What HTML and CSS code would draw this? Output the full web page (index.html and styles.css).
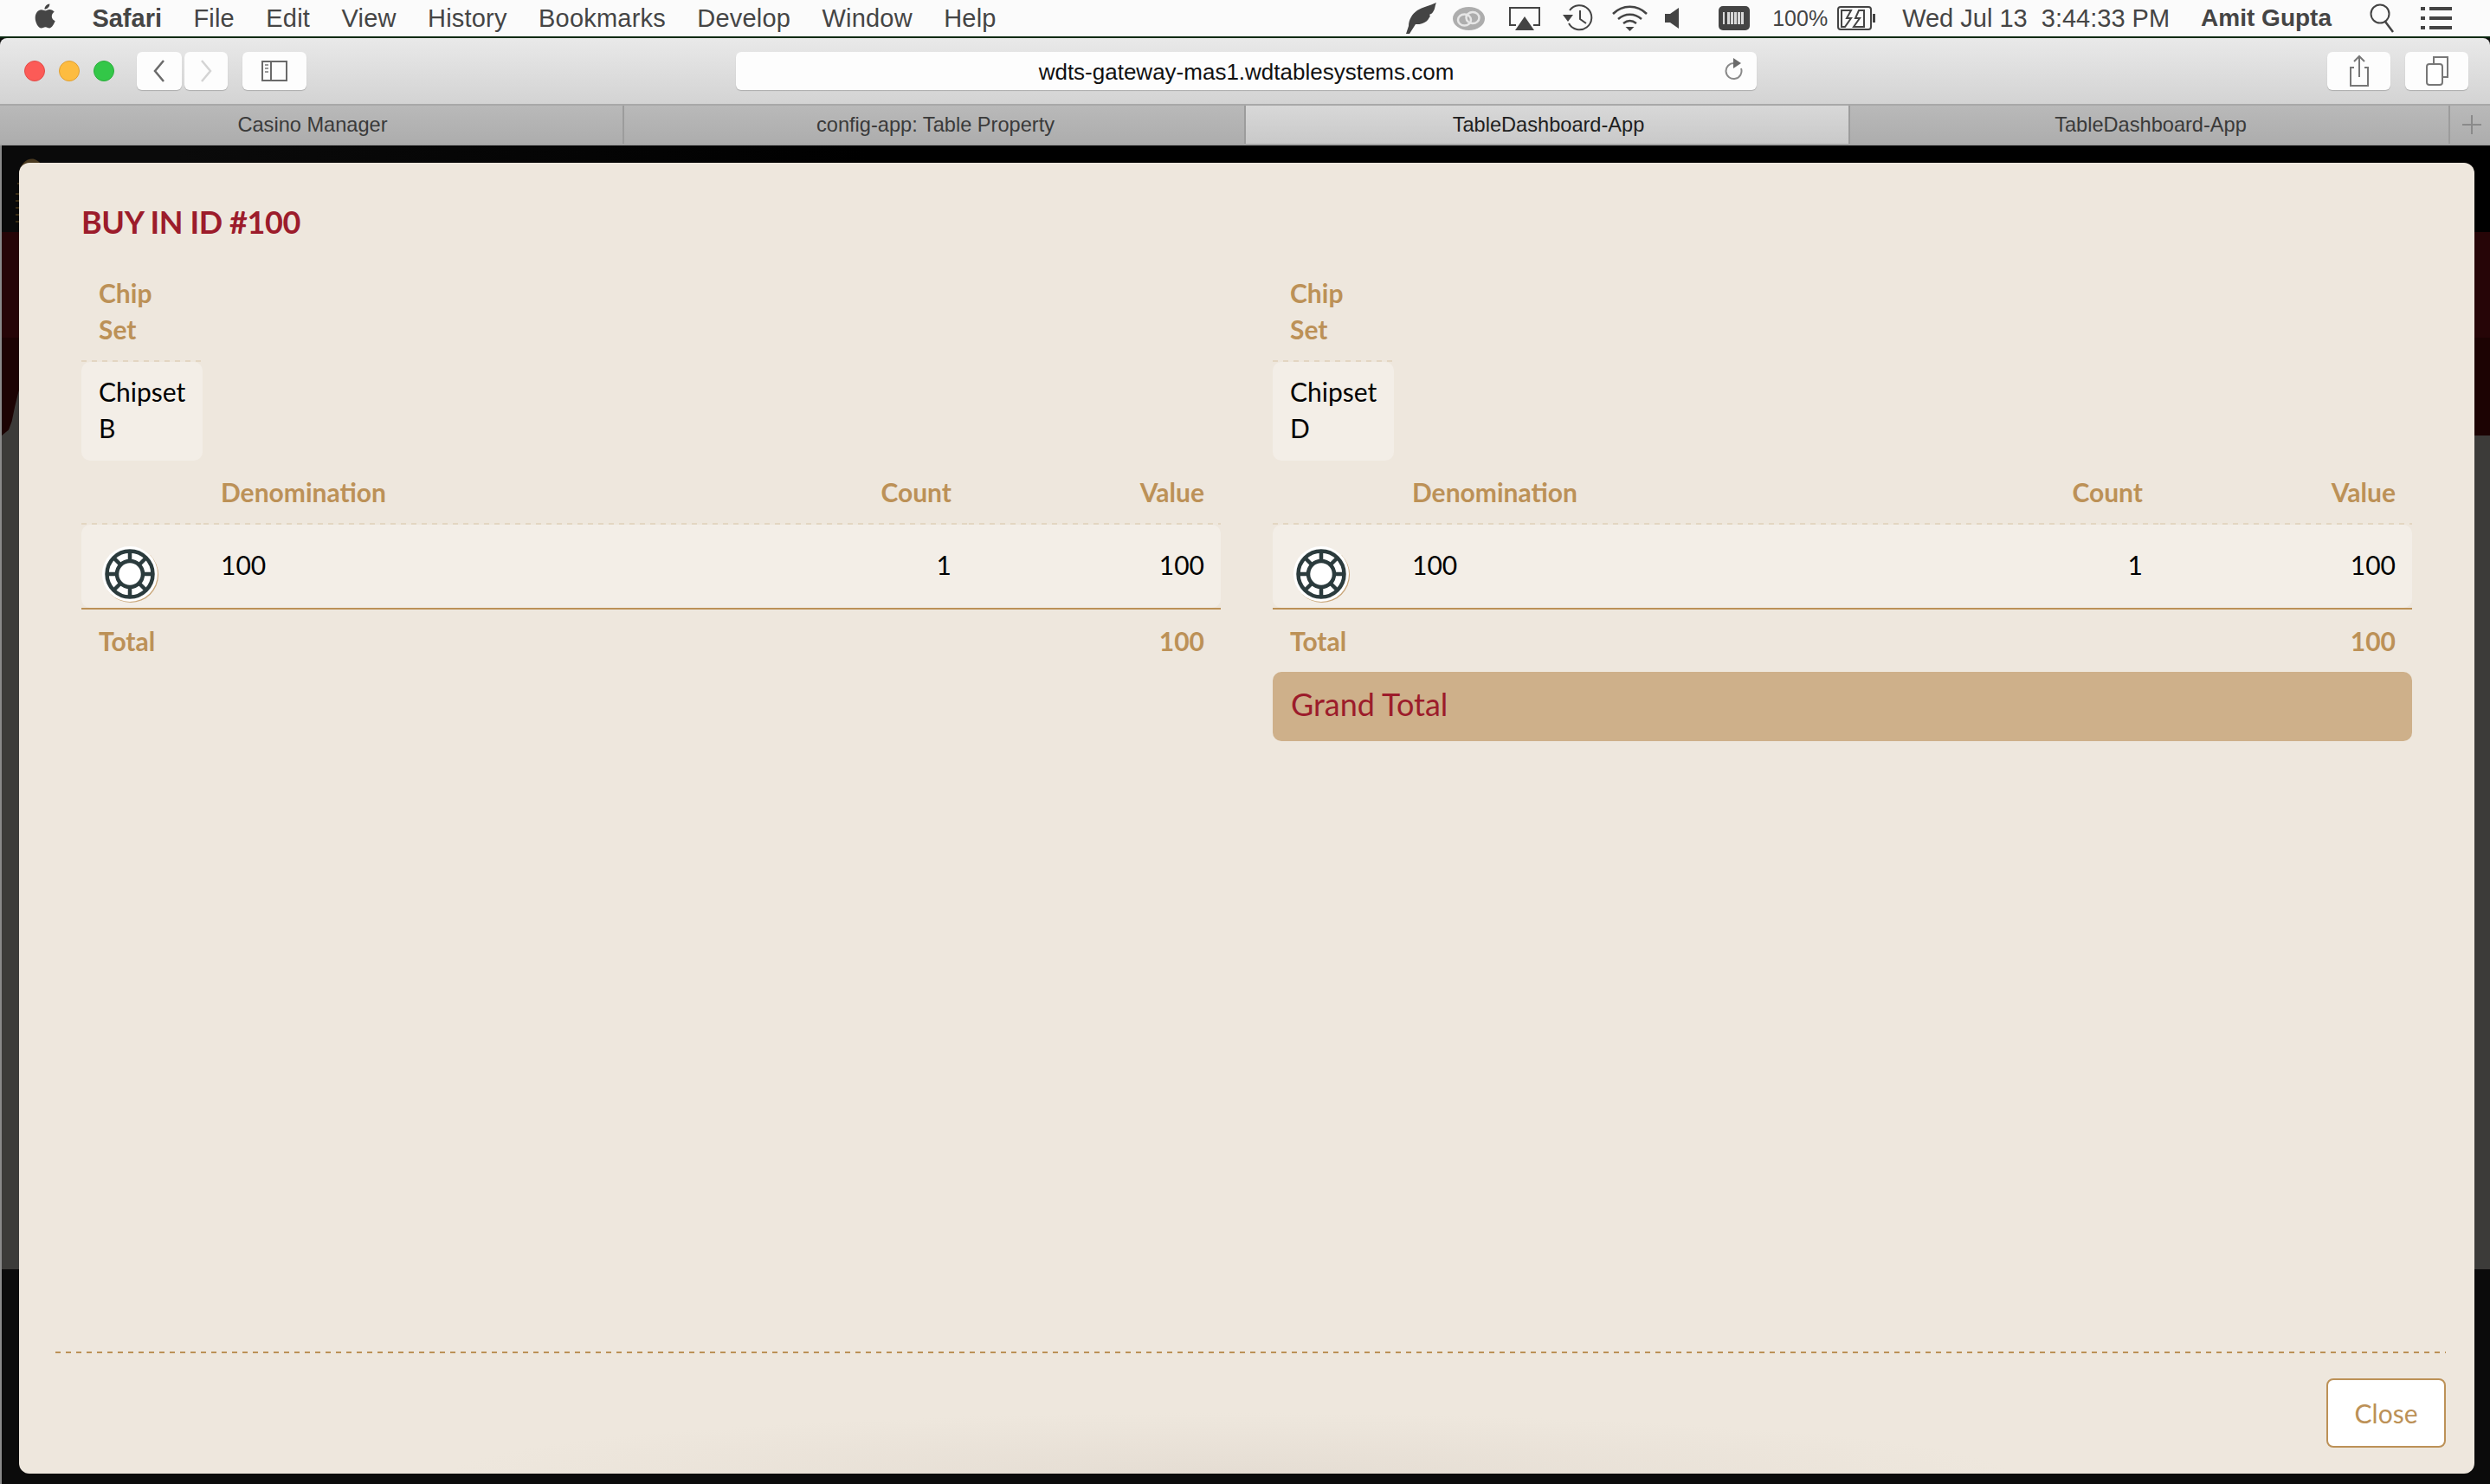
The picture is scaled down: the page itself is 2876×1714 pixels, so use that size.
FILE: index.html
```html
<!DOCTYPE html>
<html lang="en">
<head>
  <meta charset="UTF-8" />
  <title>TableDashboard-App</title>
  <link rel="stylesheet" href="styles.css">
</head>
<body>
  <header class="menubar">
    <nav class="menu-left">
      <svg class="apple" viewBox="0 0 26 32"><path d="M18 1c.3 3-2.600 6.500-6 6.300C11.700 4.300 14.800 1.200 18 1zM12.500 9c1.400 0 3-1.400 5.500-1.400 2.300 0 4.400 1.100 5.700 3-4.600 2.700-3.900 9 .9 10.900-1.100 3.200-4 8.500-6.800 8.500-1.900 0-2.600-1.300-4.800-1.300-2.300 0-3.100 1.300-4.900 1.300C4.500 30 .7 23.300.7 17.700.7 11.800 4.300 8 8 8c1.900 0 3.300 1 4.500 1z"/></svg>
      <span class="menu-app">Safari</span>
      <span>File</span>
      <span>Edit</span>
      <span>View</span>
      <span>History</span>
      <span>Bookmarks</span>
      <span>Develop</span>
      <span>Window</span>
      <span>Help</span>
    </nav>
    <div class="menu-right">
      <svg class="mi mi-feather" viewBox="0 0 36 36"><path d="M36 0C34 4 35 7 32 11c-1 2-3 2-4 3 1 1 1 2 0 3-2 4-5 6-8 7-2 1-5 1-8 1l-7 11H1l3-9C4 20 8 13 14 9c6-4 14-5 22-9z"/></svg>
      <svg class="mi mi-cc" viewBox="0 0 37 27"><ellipse cx="18.500" cy="13.500" rx="18.500" ry="13.500" fill="#adadad"/><ellipse cx="13.500" cy="15" rx="7.500" ry="6.500" fill="none" stroke="#e6e6e6" stroke-width="2.500"/><ellipse cx="23" cy="12.500" rx="7.500" ry="6.500" fill="none" stroke="#e6e6e6" stroke-width="2.500"/></svg>
      <svg class="mi mi-airplay" viewBox="0 0 36 27"><path d="M8 21H1V1h34v20h-7" fill="none" stroke="#444" stroke-width="2"/><path d="M18 11l11 16H7z"/></svg>
      <svg class="mi mi-history" viewBox="0 0 36 32"><path d="M9 7a14 14 0 1 1-1 15" fill="none" stroke="#444" stroke-width="2"/><path d="M1 12h12l-6 8z"/><path d="M21 7v10l7 5" fill="none" stroke="#444" stroke-width="2"/></svg>
      <svg class="mi mi-wifi" viewBox="0 0 41 30"><path d="M1 10c11-11 28-11 39 0M7 16c8-7 19-7 27 0M13 21c5-4 10-4 15 0" fill="none" stroke="#444" stroke-width="2.500"/><path d="M20.500 30l-5-5h10z"/></svg>
      <svg class="mi mi-speaker" viewBox="0 0 16 24"><path d="M0 7h6l10-7v24L6 17H0z"/></svg>
      <svg class="mi mi-bars" viewBox="0 0 36 28"><rect width="36" height="28" rx="5"/><path d="M5 7h2v14H5zM10 7h3v14h-3zM14 7h3v14h-3zM18 7h3v14h-3zM22 7h3v14h-3zM26 7h3v14h-3z" fill="#d8d8d8"/></svg>
      <span class="menu-pct">100%</span>
      <svg class="mi mi-battery" viewBox="0 0 44 28"><rect x="1" y="1" width="38" height="26" rx="3" fill="none" stroke="#444" stroke-width="2"/><path d="M41 9h3v10h-3z"/><path d="M5 5h11l-5 9h5L9 24H5zM31 5v19H19l7-10h-5l4-9z" fill="none" stroke="#444" stroke-width="2"/></svg>
      <span class="menu-clock">Wed Jul 13&nbsp; 3:44:33 PM</span>
      <span class="menu-user">Amit Gupta</span>
      <svg class="mi mi-search" viewBox="0 0 28 34"><circle cx="12" cy="12" r="10.500" fill="none" stroke="#444" stroke-width="2"/><path d="M18 21l9 12" stroke="#444" stroke-width="2.500"/></svg>
      <svg class="mi mi-list" viewBox="0 0 36 26"><path d="M0 0h5v4H0zM10 0h26v4H10zM0 11h5v4H0zM10 11h26v4H10zM0 22h5v4H0zM10 22h26v4H10z"/></svg>
    </div>
  </header>

  <div class="toolbar">
    <div class="lights">
      <i class="light light-red"></i>
      <i class="light light-yellow"></i>
      <i class="light light-green"></i>
    </div>
    <div class="tool-btn btn-back"><svg viewBox="0 0 14 26"><path d="M12 1L2 13l10 12" fill="none" stroke="#6a6a6a" stroke-width="2.500"/></svg></div>
    <div class="tool-btn btn-forward"><svg viewBox="0 0 14 26"><path d="M2 1l10 12L2 25" fill="none" stroke="#d4d4d4" stroke-width="2.500"/></svg></div>
    <div class="tool-btn btn-sidebar"><svg viewBox="0 0 30 24"><rect x="1" y="1" width="28" height="22" fill="none" stroke="#6a6a6a" stroke-width="2"/><path d="M11 1v22" stroke="#6a6a6a" stroke-width="2"/><path d="M4 5h4M4 9h4M4 13h4" stroke="#9a9a9a" stroke-width="2"/></svg></div>
    <div class="url-field">
      <span class="url-text">wdts-gateway-mas1.wdtablesystems.com</span>
      <svg class="url-reload" viewBox="0 0 22 28"><path d="M12 6a9 9 0 1 0 8 6" fill="none" stroke="#8a8a8a" stroke-width="2"/><path d="M11 0l9 6-9 6z" fill="#6a6a6a"/></svg>
    </div>
    <div class="tool-btn btn-share"><svg viewBox="0 0 24 38"><path d="M6 15H2v21h20V15h-4" fill="none" stroke="#777" stroke-width="2"/><path d="M12 26V2M6 8l6-6 6 6" fill="none" stroke="#777" stroke-width="2"/></svg></div>
    <div class="tool-btn btn-tabs"><svg viewBox="0 0 26 34"><path d="M9 9V1h16v23h-6" fill="none" stroke="#777" stroke-width="2"/><rect x="1" y="9" width="18" height="24" rx="3" fill="#fff" stroke="#777" stroke-width="2"/></svg></div>
  </div>

  <div class="tabbar">
    <div class="tab">Casino Manager</div>
    <div class="tab">config-app: Table Property</div>
    <div class="tab tab-active">TableDashboard-App</div>
    <div class="tab">TableDashboard-App</div>
    <div class="tab tab-new"><svg viewBox="0 0 24 24"><path d="M12 1v22M1 12h22" stroke="#8a8a8a" stroke-width="2"/></svg></div>
  </div>

  <main class="page">
    <div class="band band-top"></div>
    <div class="band band-red"></div>
    <div class="band band-maroon"></div>
    <div class="band band-gray"></div>
    <div class="band band-foot"></div>
    <svg class="page-logo" viewBox="0 0 36 80"><path d="M6 18C8 6 16 0 24 2c6 2 10 8 12 14H6z" fill="#4a3a20"/><path d="M4 30h14M2 42h16M2 50h16M2 58h16M2 66h14M2 74h14" stroke="#3a2d14" stroke-width="2"/></svg>
    <i class="page-curve"></i>

    <section class="modal">
      <h2 class="modal-title">BUY IN ID #100</h2>
      <div class="modal-body">
        <div class="buyin">
          <table class="chipset-table">
            <tr><th>Chip Set</th></tr>
            <tr><td>Chipset B</td></tr>
          </table>
          <table class="denom-table">
            <colgroup><col class="col-icon"><col><col class="col-count"><col class="col-value"></colgroup>
            <thead>
              <tr><th></th><th>Denomination</th><th class="num">Count</th><th class="num">Value</th></tr>
            </thead>
            <tbody>
              <tr class="denom-row">
                <td class="chip-cell">
                  <svg class="chip" viewBox="0 0 72 72"><circle cx="37" cy="37" r="32" fill="#c9a679"/><circle cx="36" cy="36" r="32" fill="#fff"/><g fill="none" stroke="#2b3b3d" stroke-width="4.500"><circle cx="36" cy="36" r="26.500"/><circle cx="36" cy="36" r="15"/><path d="M36 8v13M36 51v13M8 36h13M51 36h13M16.500 16.500l9 9M46.500 46.500l9 9M55.500 16.500l-9 9M25.500 46.500l-9 9"/></g></svg>
                </td>
                <td>100</td>
                <td class="num">1</td>
                <td class="num">100</td>
              </tr>
            </tbody>
            <tfoot>
              <tr><th colspan="2">Total</th><th></th><th class="num">100</th></tr>
            </tfoot>
          </table>
        </div>
        <div class="buyin">
          <table class="chipset-table">
            <tr><th>Chip Set</th></tr>
            <tr><td>Chipset D</td></tr>
          </table>
          <table class="denom-table">
            <colgroup><col class="col-icon"><col><col class="col-count"><col class="col-value"></colgroup>
            <thead>
              <tr><th></th><th>Denomination</th><th class="num">Count</th><th class="num">Value</th></tr>
            </thead>
            <tbody>
              <tr class="denom-row">
                <td class="chip-cell">
                  <svg class="chip" viewBox="0 0 72 72"><circle cx="37" cy="37" r="32" fill="#c9a679"/><circle cx="36" cy="36" r="32" fill="#fff"/><g fill="none" stroke="#2b3b3d" stroke-width="4.500"><circle cx="36" cy="36" r="26.500"/><circle cx="36" cy="36" r="15"/><path d="M36 8v13M36 51v13M8 36h13M51 36h13M16.500 16.500l9 9M46.500 46.500l9 9M55.500 16.500l-9 9M25.500 46.500l-9 9"/></g></svg>
                </td>
                <td>100</td>
                <td class="num">1</td>
                <td class="num">100</td>
              </tr>
            </tbody>
            <tfoot>
              <tr><th colspan="2">Total</th><th></th><th class="num">100</th></tr>
            </tfoot>
          </table>
          <div class="grand-total">Grand Total</div>
        </div>
      </div>
      <footer class="modal-footer">
        <button class="close-btn" type="button">Close</button>
      </footer>
    </section>
  </main>
</body>
</html>
```

FILE: styles.css
```css
* {
  box-sizing: border-box;
}

body {
  margin: 0;
  height: 1714px;
  overflow: hidden;
  background: #0b0b0b;
  font-family: "Liberation Sans", Arial, sans-serif;
}

/* mac menu bar */
.menubar {
  height: 44px;
  background: #fbfbfb;
  border-bottom: 2px solid #0c2a12;
  display: flex;
  justify-content: space-between;
  align-items: center;
  padding: 0 44px 0 40px;
  font-size: 29px;
  color: #454545;
}

.menu-left {
  display: flex;
  align-items: center;
  gap: 36.4px;
  letter-spacing: 0.2px;
}

.apple {
  width: 25px;
  height: 32px;
  fill: #454545;
  margin: -4px 5px 0 0;
}

.menu-app,
.menu-user {
  font-weight: bold;
}

.menu-app {
  letter-spacing: 0;
}

.menu-right {
  display: flex;
  align-items: center;
}

.mi {
  display: block;
  fill: #444;
}

.mi-feather { width: 36px; height: 36px; }
.mi-cc { width: 37px; height: 27px; margin-left: 19px; }
.mi-airplay { width: 36px; height: 27px; margin-left: 28px; }
.mi-history { width: 36px; height: 32px; margin-left: 25px; }
.mi-wifi { width: 41px; height: 30px; margin-left: 22px; }
.mi-speaker { width: 16px; height: 24px; margin-left: 20px; }
.mi-bars { width: 36px; height: 28px; margin-left: 46px; }
.mi-battery { width: 44px; height: 28px; margin-left: 11px; }
.mi-search { width: 28px; height: 34px; margin-left: 44px; }
.mi-list { width: 36px; height: 26px; margin-left: 31px; }

.menu-pct {
  font-size: 25px;
  margin-left: 26px;
}

.menu-clock {
  margin-left: 31px;
}

.menu-user {
  font-size: 28px;
  margin-left: 36px;
}

/* safari chrome */
.toolbar {
  height: 78px;
  background: linear-gradient(#e9e9e9, #d3d3d3);
  border-bottom: 2px solid #a8a8a8;
  border-radius: 8px 8px 0 0;
  padding: 16px 25px 0 28px;
  display: flex;
  align-items: flex-start;
}

.lights {
  display: flex;
  gap: 16px;
  margin-top: 10px;
  width: 130px;
}

.light {
  width: 24px;
  height: 24px;
  border-radius: 50%;
}

.light-red { background: #fc5b57; border: 1px solid #e24b47; }
.light-yellow { background: #fdbc40; border: 1px solid #e1a032; }
.light-green { background: #33c748; border: 1px solid #2bad3c; }

.tool-btn {
  height: 44px;
  background: #fdfdfd;
  border-radius: 6px;
  box-shadow: 0 1px 1px rgba(0, 0, 0, 0.2);
  display: flex;
  align-items: center;
  justify-content: center;
}

.btn-back { width: 52px; }
.btn-back svg { width: 14px; height: 26px; }
.btn-forward { width: 50px; margin-left: 3px; }
.btn-forward svg { width: 14px; height: 26px; }
.btn-sidebar { width: 74px; margin-left: 17px; }
.btn-sidebar svg { width: 30px; height: 24px; }

.url-field {
  width: 1179px;
  height: 44px;
  margin-left: 496px;
  background: #fdfdfd;
  border-radius: 6px;
  box-shadow: 0 1px 1px rgba(0, 0, 0, 0.2);
  position: relative;
  display: flex;
  align-items: center;
  justify-content: center;
}

.url-text {
  font-size: 26px;
  color: #111;
  margin-top: 2px;
}

.url-reload {
  position: absolute;
  right: 16px;
  top: 7px;
  width: 22px;
  height: 28px;
}

.btn-share { width: 73px; margin-left: 659px; }
.btn-share svg { width: 24px; height: 38px; }
.btn-tabs { width: 73px; margin-left: 17px; }
.btn-tabs svg { width: 26px; height: 34px; }

.tabbar {
  height: 46px;
  display: grid;
  grid-template-columns: 721px 718px 698px 693px 46px;
  border-bottom: 2px solid #a6a6a6;
}

.tab {
  background: linear-gradient(#b9b9b9, #adadad);
  border-right: 2px solid #9c9c9c;
  display: flex;
  align-items: center;
  justify-content: center;
  padding-left: 3px;
  font-size: 23.6px;
  color: #3a3a3a;
}

.tab-active {
  background: linear-gradient(#d8d8d8, #c9c9c9);
  color: #1e1e1e;
}

.tab-new {
  border-right: 0;
}

.tab-new svg {
  width: 24px;
  height: 24px;
}

/* dimmed page behind the dialog */
.page {
  position: relative;
  height: 1546px;
  border-left: 2px solid #8a8a8a;
}

.band-top { height: 100px; background: linear-gradient(90deg, #0a0a0a 200px, #000 1000px); }
.band-red { height: 122px; background: #260507; }
.band-maroon { height: 113px; background: #1c0303; }
.band-gray { height: 963px; background: #3c3b39; }
.band-foot { height: 248px; background: #0b0b0b; }

.page-logo {
  position: absolute;
  left: 14px;
  top: 14px;
  width: 36px;
  height: 80px;
}

.page-curve {
  position: absolute;
  left: 0;
  top: 282px;
  width: 20px;
  height: 54px;
  background: #3c3b39;
  clip-path: polygon(100% 0, 100% 100%, 0 100%, 0 98%, 40% 86%, 58% 68%, 76% 36%);
}

/* dialog */
.modal {
  position: absolute;
  left: 20px;
  top: 20px;
  width: 2836px;
  height: 1514px;
  border-radius: 12px;
  background: radial-gradient(ellipse 900px 70px at 1400px 100%, #e5ddd3, transparent), #eee7dd;
  padding: 0 72px;
  font-family: Lato, "Liberation Sans", sans-serif;
  font-size: 30px;
  color: #000;
  display: flex;
  flex-direction: column;
}

.modal-title {
  margin: 43px 0 0;
  font-size: 36px;
  line-height: 50px;
  font-weight: bold;
  letter-spacing: -0.4px;
  color: #9c1c2b;
}

.modal-body {
  flex: 1;
  display: grid;
  grid-template-columns: 1316px 1316px;
  gap: 60px;
  margin-top: 8px;
  align-items: start;
}

table {
  border-collapse: separate;
  border-spacing: 0;
}

th {
  font-weight: 700;
  color: #bc9157;
  text-align: left;
}

th,
td {
  padding: 0 20px;
  line-height: 42px;
}

.num {
  text-align: right;
}

th.num:last-child,
td.num:last-child {
  padding-right: 19px;
}

.chipset-table {
  width: 140px;
}

.chipset-table th {
  padding-top: 28px;
  padding-bottom: 17px;
  background: linear-gradient(90deg, #e3d6c2 50%, transparent 50%) 0 100% / 12px 2px repeat-x;
}

.chipset-table td {
  background: #f3eee7;
  border-radius: 10px;
  padding-top: 13px;
  padding-bottom: 17px;
}

.denom-table {
  width: 100%;
  table-layout: fixed;
}

.col-icon { width: 141px; }
.col-count { width: 200px; }
.col-value { width: 291px; }

.denom-table thead th {
  height: 74px;
  padding-bottom: 2px;
  background: linear-gradient(90deg, #e3d6c2 50%, transparent 50%) 0 100% / 12px 2px repeat-x;
}

.denom-row td {
  height: 96px;
  vertical-align: top;
  padding-top: 25px;
  background: #f3eee7;
}

.denom-row td.chip-cell {
  padding-top: 21px;
  border-radius: 10px 0 0 10px;
}

.denom-row td:last-child {
  border-radius: 0 10px 10px 0;
}

.chip {
  display: block;
  width: 72px;
  height: 72px;
}

.denom-table tfoot th {
  height: 74px;
  padding-top: 0;
  border-top: 2px solid #bc9157;
}

.grand-total {
  height: 80px;
  background: #ceb08a;
  border-radius: 10px;
  padding: 0 21px 6px;
  display: flex;
  align-items: center;
  font-size: 36px;
  color: #9c1c2b;
}

.modal-footer {
  margin: 0 -39px 30px -30px;
  padding-top: 31px;
  background: linear-gradient(90deg, #bc9157 50%, transparent 50%) 0 0 / 12px 2px repeat-x;
  display: flex;
  justify-content: flex-end;
}

.close-btn {
  width: 138px;
  height: 80px;
  background: #fff;
  border: 2px solid #bc9157;
  border-radius: 8px;
  font-family: Lato, "Liberation Sans", sans-serif;
  font-size: 30px;
  color: #bc9157;
  padding: 0;
}
```
